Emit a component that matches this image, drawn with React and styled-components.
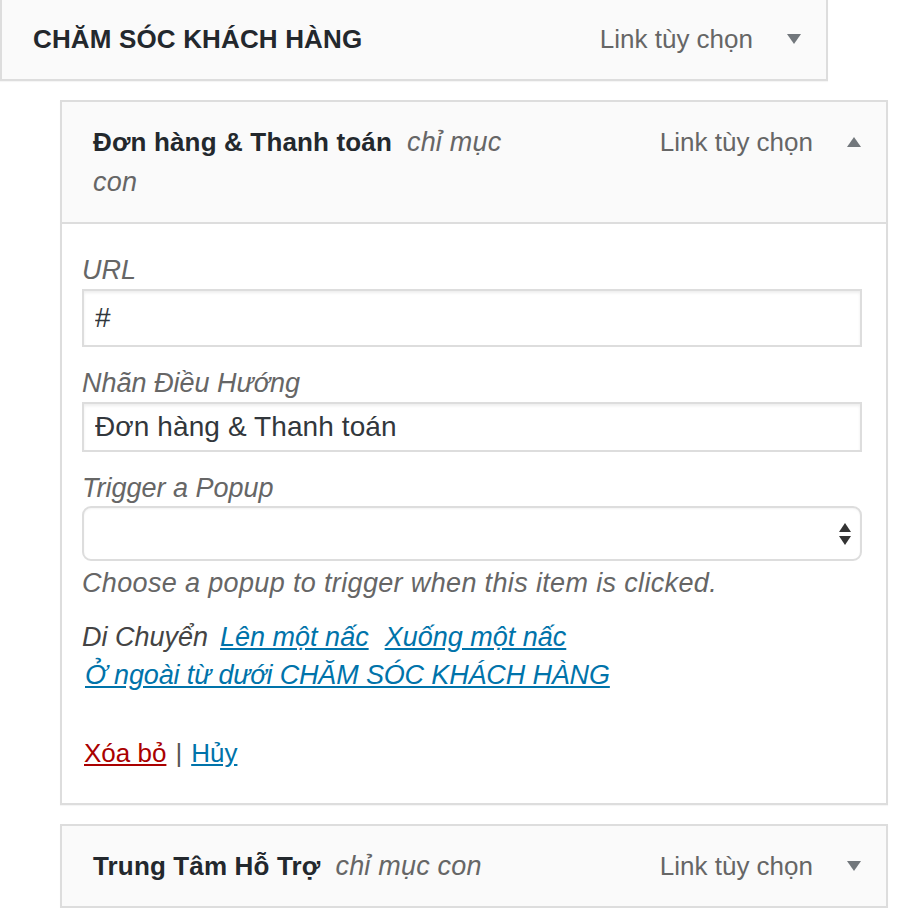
import React from 'react';
import styled, { createGlobalStyle } from 'styled-components';

const GlobalStyle = createGlobalStyle`
  body {
    margin: 0;
    background: #fff;
    font-family: "Liberation Sans", Arial, sans-serif;
  }
  * { box-sizing: border-box; }
`;

const MenuList = styled.ul`
  list-style: none;
  margin: -3px 0 0;
  padding: 0;
  width: 888px;
  display: flex;
  flex-direction: column;
  gap: 19px;
`;

const Item = styled.li`
  width: 828px;
  margin-left: ${p => p.depth * 60}px;
  box-shadow: 0 1px 1px rgba(0, 0, 0, 0.04);
`;

const Handle = styled.div`
  display: flex;
  align-items: flex-start;
  background: #fafafa;
  border: 2px solid #ddd;
  padding: 0 25px 0 31px;
`;

const Title = styled.div`
  flex: 0 1 436px;
  padding: 20px 0;
  line-height: 40px;
  font-size: 26px;
  font-weight: 700;
  letter-spacing: 0.15px;
  color: #23282d;
`;

const SubTag = styled.span`
  margin-left: 15px;
  font-size: 27px;
  font-style: italic;
  font-weight: 400;
  letter-spacing: 0.2px;
  color: #666;
`;

const Controls = styled.div`
  margin-left: auto;
  padding-top: 20px;
  line-height: 40px;
  display: flex;
  align-items: center;
  gap: 34px;
  font-size: 26px;
  color: #666;
`;

const Arrow = styled.svg`
  width: 14px;
  height: 12px;
  display: block;
`;

const Settings = styled.div`
  background: #fff;
  border: 2px solid #ddd;
  border-top: none;
  padding: 31px 24px 35px 20px;
`;

const Field = styled.div`
  & + & {
    margin-top: 21px;
  }
`;

const Label = styled.label`
  display: block;
  font-size: 27px;
  line-height: 30px;
  font-style: italic;
  color: #666;
  margin-bottom: ${p => p.gap || 4}px;
`;

const TextInput = styled.input`
  display: block;
  width: 100%;
  height: ${p => p.h}px;
  border: 2px solid #ddd;
  box-shadow: inset 0 2px 3px rgba(0, 0, 0, 0.07);
  padding: 0 11px;
  font-family: "Liberation Sans", Arial, sans-serif;
  font-size: 28px;
  letter-spacing: 0.1px;
  color: #32373c;
  background: #fff;
  outline: none;
`;

const SelectBox = styled.div`
  height: 55px;
  border: 2px solid #ddd;
  border-radius: 9px;
  background: #fff;
  box-shadow: inset 0 1px 2px rgba(0, 0, 0, 0.05);
  display: flex;
  align-items: center;
  justify-content: flex-end;
  padding-right: 8px;
`;

const Description = styled.p`
  margin: 7px 0 0;
  font-size: 27px;
  line-height: 30px;
  letter-spacing: 0.35px;
  font-style: italic;
  color: #666;
`;

const Move = styled.div`
  margin-top: 20px;
  font-size: 27px;
  line-height: 38px;
  font-style: italic;
  color: #444;
`;

const MoveLabel = styled.span`
  margin-right: 12px;
`;

const Link = styled.a`
  color: ${p => (p.danger ? '#a00' : '#0073aa')};
  text-decoration: underline;
  margin-right: ${p => p.gap || 0}px;
  cursor: pointer;
`;

const MoveLine = styled.div`
  padding-left: 3px;
  letter-spacing: -0.15px;
`;

const Actions = styled.div`
  margin-top: 44px;
  padding-left: 2px;
  font-size: 26px;
  line-height: 30px;
  color: #444;
`;

const Sep = styled.span`
  margin: 0 9px;
  color: #555;
`;

const ToggleArrow = ({ up }) => (
  <Arrow viewBox="0 0 14 12">
    <polygon points={up ? '7,1 14,11 0,11' : '0,1 14,1 7,11'} fill="#72777c" />
  </Arrow>
);

const SortArrows = () => (
  <svg width="14" height="24" viewBox="0 0 14 24">
    <polygon points="7,1 13,10 1,10" fill="#333" />
    <polygon points="1,14 13,14 7,23" fill="#333" />
  </svg>
);

const ItemHandle = ({ title, sub, open }) => (
  <Handle>
    <Title>
      {title}
      {sub && <SubTag>{sub}</SubTag>}
    </Title>
    <Controls>
      <span>Link tùy chọn</span>
      <ToggleArrow up={open} />
    </Controls>
  </Handle>
);

export default function App() {
  return (
    <>
      <GlobalStyle />
      <MenuList>
        <Item depth={0}>
          <ItemHandle title="CHĂM SÓC KHÁCH HÀNG" />
        </Item>

        <Item depth={1}>
          <ItemHandle title="Đơn hàng & Thanh toán" sub="chỉ mục con" open />
          <Settings>
            <Field>
              <Label>URL</Label>
              <TextInput h={58} defaultValue="#" />
            </Field>
            <Field>
              <Label>Nhãn Điều Hướng</Label>
              <TextInput h={50} defaultValue="Đơn hàng & Thanh toán" />
            </Field>
            <Field>
              <Label gap={3}>Trigger a Popup</Label>
              <SelectBox>
                <SortArrows />
              </SelectBox>
            </Field>
            <Description>Choose a popup to trigger when this item is clicked.</Description>

            <Move>
              <div>
                <MoveLabel>Di Chuyển</MoveLabel>
                <Link gap={16}>Lên một nấc</Link>
                <Link>Xuống một nấc</Link>
              </div>
              <MoveLine>
                <Link>Ở ngoài từ dưới CHĂM SÓC KHÁCH HÀNG</Link>
              </MoveLine>
            </Move>

            <Actions>
              <Link danger>Xóa bỏ</Link>
              <Sep>|</Sep>
              <Link>Hủy</Link>
            </Actions>
          </Settings>
        </Item>

        <Item depth={1}>
          <ItemHandle title="Trung Tâm Hỗ Trợ" sub="chỉ mục con" />
        </Item>
      </MenuList>
    </>
  );
}
